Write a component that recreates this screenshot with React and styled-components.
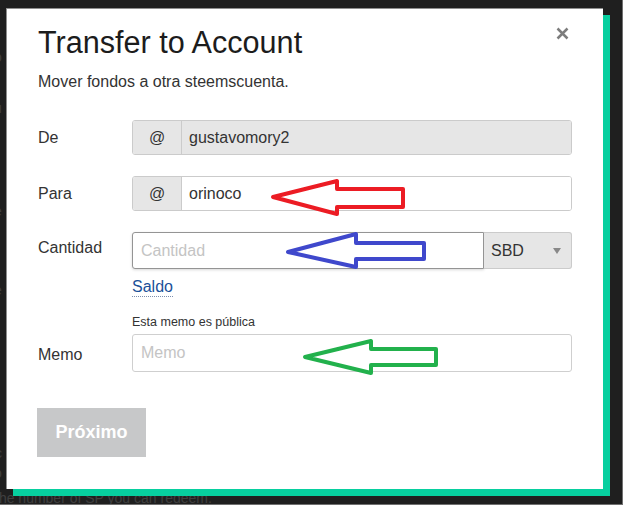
import React from "react";
import styled, { createGlobalStyle } from "styled-components";

const GlobalStyle = createGlobalStyle`
  html, body { margin: 0; padding: 0; background: #ffffff; }
  body { font-family: "Liberation Sans", Arial, Helvetica, sans-serif; }
  * { box-sizing: border-box; }
`;

const Backdrop = styled.div`
  position: relative;
  width: 623px;
  height: 505px;
  padding: 8px 0 0 6px;
  background: #1f1f1f;
  border-right: 1px solid #707070;
  border-bottom: 1px solid #707070;
  overflow: hidden;
`;

const PageBehind = styled.div`
  position: absolute;
  inset: 0;
  color: #3f3f3f;
  font-size: 14px;
  line-height: 16px;
`;

const BehindText = styled.span`
  position: absolute;
  white-space: nowrap;
`;

const Modal = styled.div`
  position: relative;
  z-index: 1;
  width: 597px;
  background: #ffffff;
  border-top: 1px solid #8e8e8e;
  border-left: 1px solid #8e8e8e;
  padding: 15px 31px 32px 31px;
  box-shadow: 7px 7px 0 #07cf9f;
`;

const Header = styled.div`
  display: flex;
  justify-content: space-between;
  align-items: flex-start;
`;

const Title = styled.h1`
  margin: 0;
  font-size: 30.6px;
  line-height: 36px;
  font-weight: normal;
  color: #1c1c1c;
`;

const CloseButton = styled.button`
  display: flex;
  margin: 3px 3px 0 0;
  padding: 0;
  border: none;
  background: none;
  cursor: pointer;
`;

const Subtitle = styled.p`
  margin: 12px 0 0 0;
  font-size: 16px;
  line-height: 20px;
  color: #333333;
`;

const Form = styled.div`
  margin-top: 28px;
  display: flex;
  flex-direction: column;
`;

const Row = styled.div`
  display: grid;
  grid-template-columns: 94px 1fr;
  margin-top: ${(p) => p.$gap || 0}px;
`;

const Label = styled.label`
  font-size: 16px;
  line-height: ${(p) => p.$h || 35}px;
  color: #333333;
  align-self: ${(p) => (p.$end ? "end" : "start")};
`;

const Control = styled.div`
  display: flex;
  flex-direction: column;
`;

const InputGroup = styled.div`
  display: flex;
  height: 35px;
  border: 1px solid #cbcbcb;
  border-radius: 3px;
  overflow: hidden;
`;

const Addon = styled.span`
  width: 49px;
  flex: none;
  display: flex;
  align-items: center;
  justify-content: center;
  background: #e6e6e6;
  border-right: 1px solid #cbcbcb;
  font-size: 16px;
  color: #333333;
`;

const Field = styled.input`
  flex: 1;
  min-width: 0;
  border: none;
  outline: none;
  margin: 0;
  padding: 0 0 0 7px;
  font: inherit;
  font-size: 16px;
  color: #333333;
  background: ${(p) => (p.$disabled ? "#e6e6e6" : "#ffffff")};
`;

const AmountRow = styled.div`
  display: grid;
  grid-template-columns: 1fr 88px;
  height: 37px;
`;

const AmountInput = styled.input`
  min-width: 0;
  margin: 0;
  padding: 0 0 0 8px;
  border: 1px solid #949494;
  border-radius: 3px 0 0 3px;
  box-shadow: 0 1px 3px rgba(0, 0, 0, 0.16);
  outline: none;
  font: inherit;
  font-size: 16px;
  color: #333333;
  background: #ffffff;
  &::placeholder { color: #c4c4c4; }
`;

const Select = styled.div`
  display: flex;
  align-items: center;
  justify-content: space-between;
  padding: 0 10px 0 7px;
  background: #e6e6e6;
  border: 1px solid #cbcbcb;
  border-left: none;
  border-radius: 0 3px 3px 0;
  font-size: 16px;
  color: #333333;
`;

const Caret = styled.span`
  width: 0;
  height: 0;
  border-left: 4px solid transparent;
  border-right: 4px solid transparent;
  border-top: 6px solid #888888;
  margin-top: 1px;
`;

const Link = styled.a`
  align-self: flex-start;
  margin-top: 8px;
  font-size: 16px;
  line-height: 19px;
  color: #1a5099;
  text-decoration: none;
  border-bottom: 1px dotted #7d8fae;
`;

const Note = styled.div`
  font-size: 12.5px;
  line-height: 15px;
  color: #333333;
  margin-bottom: 4px;
`;

const MemoInput = styled.input`
  height: 38px;
  margin: 0;
  padding: 0 0 0 8px;
  border: 1px solid #cfcfcf;
  border-radius: 3px;
  outline: none;
  font: inherit;
  font-size: 16px;
  color: #333333;
  background: #ffffff;
  &::placeholder { color: #c4c4c4; }
`;

const SubmitButton = styled.button`
  margin: 36px 0 0 -1px;
  width: 109px;
  height: 49px;
  border: none;
  border-radius: 0;
  background: #c7c8c9;
  color: #ffffff;
  font-family: inherit;
  font-size: 18px;
  font-weight: bold;
  cursor: default;
`;

const Annotations = styled.svg`
  position: absolute;
  left: 0;
  top: 0;
  z-index: 2;
  pointer-events: none;
`;

const arrows = [
  { color: "#ec1c24", pts: "273,197 337,181 337,189 403,189 403,207 337,207 337,214" },
  { color: "#3f48cc", pts: "288,252 356,234 356,243 424,243 424,259 356,259 356,267" },
  { color: "#22b14c", pts: "305,357 371,341 371,349 436,349 436,365 371,365 371,373" },
];

export default function App() {
  return (
    <>
      <GlobalStyle />
      <Backdrop>
        <PageBehind>
          <BehindText style={{ left: -6, top: 49 }}>o</BehindText>
          <BehindText style={{ left: -5, top: 74 }}>r</BehindText>
          <BehindText style={{ left: -6, top: 100 }}>u</BehindText>
          <BehindText style={{ left: -6, top: 203 }}>e</BehindText>
          <BehindText style={{ left: -6, top: 282 }}>e</BehindText>
          <BehindText style={{ left: -5, top: 445 }}>c</BehindText>
          <BehindText style={{ left: -6, top: 465 }}>o</BehindText>
          <BehindText style={{ left: -5, top: 490 }}>the number of SP you can redeem.</BehindText>
        </PageBehind>
        <Modal>
          <Header>
            <Title>Transfer to Account</Title>
            <CloseButton aria-label="Cerrar">
              <svg width="13" height="13" viewBox="0 0 13 13">
                <path d="M1.5 1.5 L11.5 11.5 M11.5 1.5 L1.5 11.5" stroke="#7d7d7d" strokeWidth="2.5" strokeLinecap="butt" />
              </svg>
            </CloseButton>
          </Header>
          <Subtitle>Mover fondos a otra steemscuenta.</Subtitle>
          <Form>
            <Row>
              <Label>De</Label>
              <InputGroup>
                <Addon>@</Addon>
                <Field $disabled readOnly value="gustavomory2" />
              </InputGroup>
            </Row>
            <Row $gap={21}>
              <Label>Para</Label>
              <InputGroup>
                <Addon>@</Addon>
                <Field readOnly value="orinoco" />
              </InputGroup>
            </Row>
            <Row $gap={21}>
              <Label $h={32}>Cantidad</Label>
              <Control>
                <AmountRow>
                  <AmountInput placeholder="Cantidad" readOnly />
                  <Select>
                    <span>SBD</span>
                    <Caret />
                  </Select>
                </AmountRow>
                <Link href="#">Saldo</Link>
              </Control>
            </Row>
            <Row $gap={18}>
              <Label $end $h={35}>Memo</Label>
              <Control>
                <Note>Esta memo es pública</Note>
                <MemoInput placeholder="Memo" readOnly />
              </Control>
            </Row>
          </Form>
          <SubmitButton>Próximo</SubmitButton>
        </Modal>
        <Annotations width="623" height="505" viewBox="0 0 623 505">
          {arrows.map((a) => (
            <polygon
              key={a.color}
              points={a.pts}
              fill="none"
              stroke={a.color}
              strokeWidth="4"
              strokeLinejoin="round"
            />
          ))}
        </Annotations>
      </Backdrop>
    </>
  );
}
